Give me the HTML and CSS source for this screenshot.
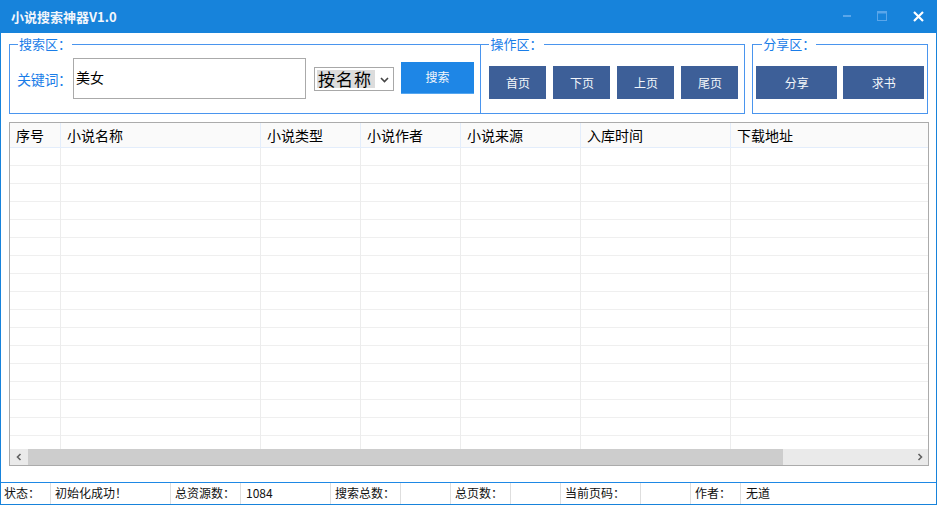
FILE: index.html
```html
<!DOCTYPE html>
<html lang="zh-CN">
<head>
<meta charset="utf-8">
<title>小说搜索神器V1.0</title>
<link rel="stylesheet" href="styles.css">
</head>
<body>
<div class="window">
  <div class="titlebar">
    <div class="title">小说搜索神器V1.0</div>
    <div class="controls">
      <div class="ctl ctl-min"><svg width="10" height="10" viewBox="0 0 10 10"><rect x="1" y="4" width="8" height="2" fill="#5aa6ea"/></svg></div>
      <div class="ctl ctl-max"><svg width="10" height="10" viewBox="0 0 10 10"><rect x="0.5" y="0.5" width="9" height="9" fill="none" stroke="#5aa6ea"/><rect x="0.5" y="0.5" width="9" height="2" fill="#5aa6ea"/></svg></div>
      <div class="ctl ctl-close"><svg width="11" height="11" viewBox="0 0 11 11"><path d="M1 1 L10 10 M10 1 L1 10" stroke="#ffffff" stroke-width="2.2"/></svg></div>
    </div>
  </div>

  <div class="content">
    <div class="groups">
      <fieldset class="group group-search">
        <legend>搜索区：</legend>
        <div class="search-row">
          <label class="kw-label">关键词：</label>
          <div class="kw-input">美女</div>
          <div class="select">
            <span class="select-value">按名称</span>
            <svg class="select-arrow" width="9" height="6" viewBox="0 0 9 6"><path d="M1 1 L4.5 4.5 L8 1" fill="none" stroke="#444" stroke-width="1.6"/></svg>
          </div>
          <div class="btn btn-search">搜索</div>
        </div>
      </fieldset>
      <fieldset class="group group-ops">
        <legend>操作区：</legend>
        <div class="btn-row">
          <div class="btn btn-op">首页</div>
          <div class="btn btn-op">下页</div>
          <div class="btn btn-op">上页</div>
          <div class="btn btn-op">尾页</div>
        </div>
      </fieldset>
      <fieldset class="group group-share">
        <legend>分享区：</legend>
        <div class="btn-row">
          <div class="btn btn-share">分享</div>
          <div class="btn btn-share">求书</div>
        </div>
      </fieldset>
    </div>

    <div class="grid">
      <div class="grid-head">
        <div class="hc c1">序号</div>
        <div class="hc c2">小说名称</div>
        <div class="hc c3">小说类型</div>
        <div class="hc c4">小说作者</div>
        <div class="hc c5">小说来源</div>
        <div class="hc c6">入库时间</div>
        <div class="hc c7">下载地址</div>
      </div>
      <div class="grid-body">
        <div class="bc c1"></div>
        <div class="bc c2"></div>
        <div class="bc c3"></div>
        <div class="bc c4"></div>
        <div class="bc c5"></div>
        <div class="bc c6"></div>
        <div class="bc c7"></div>
      </div>
      <div class="hscroll">
        <div class="sb-btn"><svg width="8" height="8" viewBox="0 0 8 8"><path d="M5.5 1 L2.5 4 L5.5 7" fill="none" stroke="#606060" stroke-width="1.6"/></svg></div>
        <div class="sb-track"><div class="sb-thumb"></div></div>
        <div class="sb-btn"><svg width="8" height="8" viewBox="0 0 8 8"><path d="M2.5 1 L5.5 4 L2.5 7" fill="none" stroke="#606060" stroke-width="1.6"/></svg></div>
      </div>
    </div>
  </div>

  <div class="statusbar">
    <div class="sc s1">状态：</div>
    <div class="sc s2">初始化成功！</div>
    <div class="sc s3">总资源数：</div>
    <div class="sc s4">1084</div>
    <div class="sc s5">搜索总数：</div>
    <div class="sc s6"></div>
    <div class="sc s7">总页数：</div>
    <div class="sc s8"></div>
    <div class="sc s9">当前页码：</div>
    <div class="sc s10"></div>
    <div class="sc s11">作者：</div>
    <div class="sc s12">无道</div>
  </div>
</div>
</body>
</html>
```

FILE: styles.css
```css
* { box-sizing: border-box; }

html, body {
  margin: 0;
  padding: 0;
  background: #ffffff;
}

body {
  font-family: "Noto Sans CJK SC", "Noto Sans", sans-serif;
  color: #000;
}

.window {
  width: 937px;
  height: 505px;
  border: 1px solid #1783db;
  border-top: 0;
  display: flex;
  flex-direction: column;
  background: #fff;
  overflow: hidden;
}

/* title bar */
.titlebar {
  height: 33px;
  margin: 0 -1px;
  background: #1783db;
  display: flex;
  align-items: center;
  justify-content: space-between;
  flex-shrink: 0;
}

.title {
  padding-left: 11px;
  color: #f2f6fb;
  font-size: 13px;
  font-weight: bold;
  line-height: 16px;
  padding-top: 1px;
}

.controls {
  display: flex;
  height: 100%;
  padding-right: 1px;
}

.ctl {
  display: flex;
  align-items: center;
  justify-content: center;
  height: 100%;
  padding-bottom: 1px;
}

.ctl-min { width: 34px; }
.ctl-max { width: 36px; }
.ctl-close { width: 36px; }

/* content */
.content {
  flex: 1;
  padding: 3px 8px 0 8px;
  display: flex;
  flex-direction: column;
}

.groups {
  display: flex;
  align-items: flex-start;
}

.group {
  margin: 0;
  padding: 0;
  min-width: 0;
  border: 1px solid #4a95ee;
  height: 78px;
}

.group legend {
  padding: 0 1px;
  font-size: 13px;
  line-height: 16px;
  color: #1a7de8;
}

.group-search {
  width: 473px;
  padding-left: 6px;
}

.group-search legend { margin-left: 2px; }

.group-ops {
  width: 265px;
  margin-left: -1px;
  padding-left: 8px;
}

.group-ops legend { margin-left: 0; }

.group-share {
  width: 176px;
  margin-left: 7px;
  padding-left: 3px;
}

.group-share legend { margin-left: 6px; }

.search-row {
  display: flex;
  align-items: center;
  margin-top: 6px;
  height: 41px;
}

.kw-label {
  width: 57px;
  font-size: 14px;
  line-height: 18px;
  color: #1a7de8;
  padding-left: 1px;
  letter-spacing: -0.3px;
}

.kw-input {
  width: 233px;
  height: 41px;
  border: 1px solid #aaaaaa;
  font-size: 14px;
  line-height: 18px;
  padding: 9px 0 0 2px;
}

.select {
  width: 80px;
  height: 24px;
  margin-left: 8px;
  border: 1px solid #a8a8a8;
  display: flex;
  align-items: center;
  justify-content: space-between;
  padding: 0 4px 0 2px;
}

.select-value {
  background: #dcdcdc;
  font-size: 17px;
  line-height: 18px;
  padding: 0 1px;
  width: 58px;
  letter-spacing: 1px;
}

.select-arrow { margin-top: 2px; }

.btn {
  display: flex;
  align-items: center;
  justify-content: center;
  color: #f4f7fb;
  font-size: 12px;
  line-height: 14px;
}

.btn-search {
  width: 73px;
  height: 32px;
  margin-left: 7px;
  margin-top: -2px;
  background: #1e86e6;
  border-bottom: 1px solid #55a6f0;
}

.btn-row {
  display: flex;
  gap: 7px;
  margin-top: 14px;
}

.btn-op {
  width: 57px;
  height: 33px;
  background: #3d5f98;
}

.group-share .btn-row { gap: 6px; }

.btn-share {
  width: 81px;
  height: 33px;
  background: #3d5f98;
}

/* grid */
.grid {
  margin-top: 8px;
  width: 920px;
  height: 344px;
  border: 1px solid #ababab;
  display: flex;
  flex-direction: column;
}

.grid-head {
  display: flex;
  height: 25px;
  background: #fafafa;
  border-bottom: 1px solid #e3edfb;
  flex-shrink: 0;
}

.hc {
  height: 100%;
  border-right: 1px solid #e3edfb;
  font-size: 14px;
  line-height: 18px;
  padding: 3px 0 0 6px;
  white-space: nowrap;
}

.c1 { width: 51px; }
.c2 { width: 200px; }
.c3 { width: 100px; }
.c4 { width: 100px; }
.c5 { width: 120px; }
.c6 { width: 150px; }
.c7 { flex: 1; border-right: 0; }

.grid-body {
  flex: 1;
  display: flex;
  background: repeating-linear-gradient(to bottom, #ffffff 0, #ffffff 17px, #efefef 17px, #efefef 18px);
}

.bc {
  height: 100%;
  border-right: 1px solid #ececec;
}

.bc.c7 { border-right: 0; }

.hscroll {
  height: 16px;
  display: flex;
  background: #eaeaea;
  flex-shrink: 0;
}

.sb-btn {
  width: 17px;
  display: flex;
  align-items: center;
  justify-content: center;
}

.sb-track {
  flex: 1;
  padding-left: 1px;
}

.sb-thumb {
  width: 755px;
  height: 100%;
  background: #cdcdcd;
}

/* status bar */
.statusbar {
  height: 22px;
  border-top: 1px solid #1e88e5;
  display: flex;
  flex-shrink: 0;
}

.sc {
  height: 100%;
  border-right: 1px solid #dedede;
  font-size: 12px;
  line-height: 20px;
  padding-left: 4px;
  white-space: nowrap;
  color: #111;
}

.s1 { width: 50px; padding-left: 3px; }
.s2 { width: 120px; }
.s3 { width: 70px; }
.s4 { width: 90px; padding-left: 5px; }
.s5 { width: 70px; }
.s6 { width: 50px; }
.s7 { width: 60px; }
.s8 { width: 50px; }
.s9 { width: 80px; }
.s10 { width: 50px; }
.s11 { width: 50px; }
.s12 { flex: 1; border-right: 0; padding-left: 5px; }
```
